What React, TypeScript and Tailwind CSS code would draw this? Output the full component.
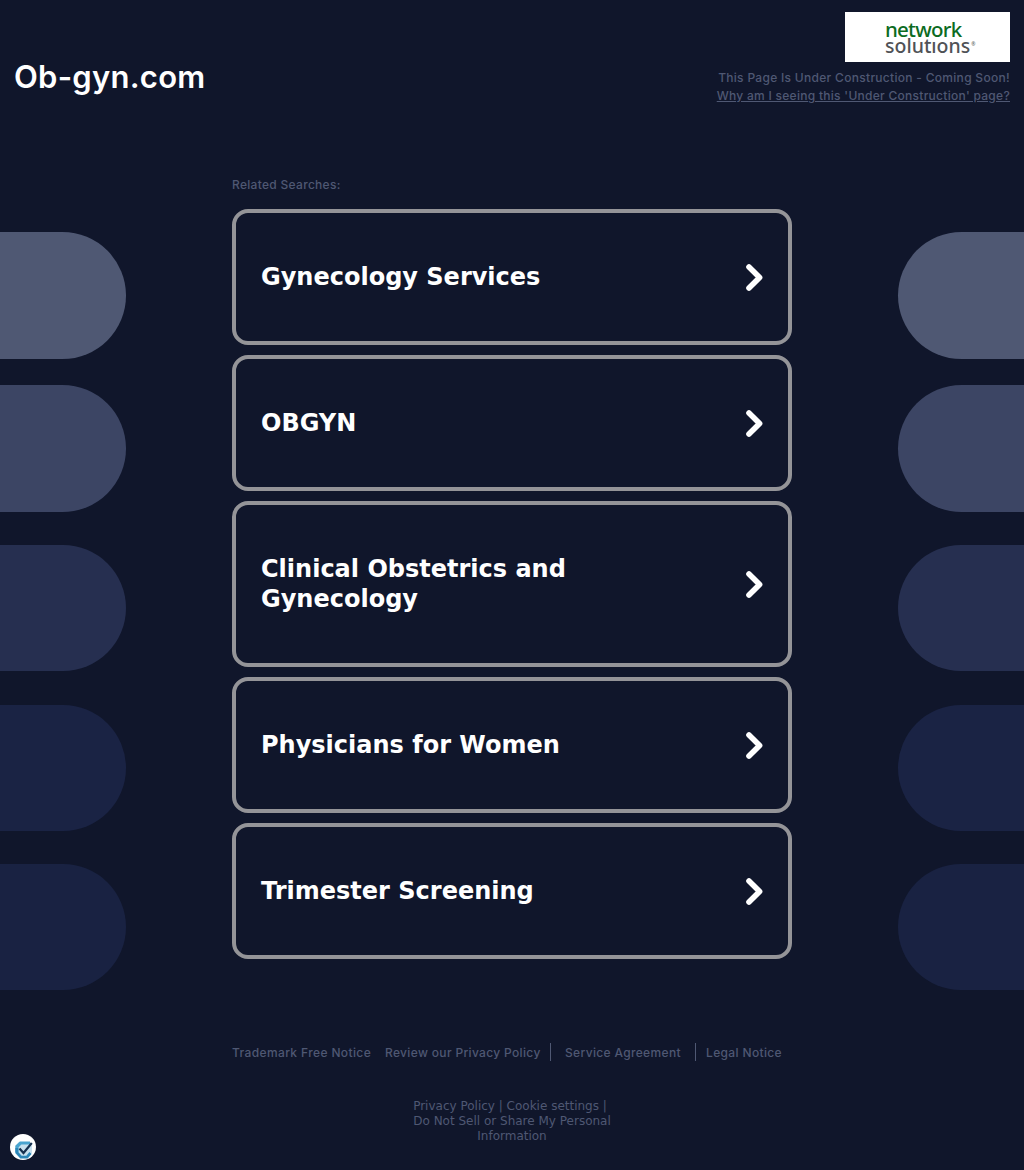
const searches = [
  { title: 'Gynecology Services', height: 'h-[136px]' },
  { title: 'OBGYN', height: 'h-[136px]' },
  { title: 'Clinical Obstetrics and Gynecology', height: 'h-[166px]' },
  { title: 'Physicians for Women', height: 'h-[136px]' },
  { title: 'Trimester Screening', height: 'h-[136px]' },
];

const pills = [
  'h-[127px] bg-[#4f5873]',
  'mt-[26px] h-[127px] bg-[#3c4564]',
  'mt-[33px] h-[126px] bg-[#262f50]',
  'mt-[34px] h-[126px] bg-[#1a2344]',
  'mt-[33px] h-[126px] bg-[#192242]',
];

function Pills({ side }: { side: 'left' | 'right' }) {
  const round = side === 'left' ? 'rounded-r-full' : 'rounded-l-full';
  return (
    <div className="flex w-[126px] flex-col pt-[62px]" aria-hidden="true">
      {pills.map((p) => (
        <div key={p} className={`shrink-0 ${round} ${p}`} />
      ))}
    </div>
  );
}

function Chevron() {
  return (
    <svg width="18" height="28" viewBox="0 0 18 28" fill="none" className="shrink-0">
      <path d="M3 4 L13.6 14.5 L3 25" stroke="#fff" strokeWidth="5.6" strokeLinecap="round" strokeLinejoin="round" />
    </svg>
  );
}

function Logo() {
  return (
    <div
      aria-label="network solutions"
      className="flex h-[50px] w-[165px] flex-col bg-white pt-[9px] pl-[40px] font-['Noto_Sans',sans-serif]"
    >
      <span className="h-[17px] text-[20.5px] leading-[17px] font-medium tracking-[-0.75px] text-[#0b6b22]">network</span>
      <span className="flex h-[16px] text-[19.5px] leading-[16px] text-[#505256]">
        solutıons<span className="ml-px text-[5px] leading-[13px]">®</span>
      </span>
    </div>
  );
}

function Badge() {
  return (
    <svg width="26" height="26" viewBox="0 0 26 26">
      <circle cx="13" cy="13" r="13" fill="#fff" />
      <path d="M9 8 H18 L22 12 V19 L17 24 H10 L5 19 V12 Z" fill="#c6e0ef" />
      <path d="M20 9 H10.5 L7 12.5 V18" fill="none" stroke="#49a4d0" strokeWidth="3.2" />
      <path d="M6.8 14 V18.5 L11 23.2 H17 L20.5 19" fill="none" stroke="#2b86b8" strokeWidth="2.8" />
      <path d="M9.5 14.5 L13.5 19 L21.8 9" fill="none" stroke="#15304f" strokeWidth="2.2" />
    </svg>
  );
}

export default function App() {
  return (
    <div className="relative flex h-[1170px] w-[1024px] flex-col overflow-hidden bg-[#10162b] font-['Inter',sans-serif] text-[#4f5873]">
      <header className="flex h-[170px] shrink-0 justify-between px-[14px] pt-3">
        <h1 className="pt-[43px] text-[31px] leading-[44px] font-semibold tracking-[0.25px] text-white">Ob-gyn.com</h1>
        <div className="flex flex-col items-end text-[12px] leading-[18px] font-medium">
          <Logo />
          <span className="mt-[7px] tracking-[0.3px] whitespace-nowrap">This Page Is Under Construction - Coming Soon!</span>
          <a href="#" className="tracking-[0.28px] whitespace-nowrap underline">Why am I seeing this 'Under Construction' page?</a>
        </div>
      </header>

      <div className="flex h-[850px] shrink-0 justify-between">
        <Pills side="left" />
        <main className="w-[560px] pt-[6px]">
          <p className="text-[12px] leading-[18px] font-medium tracking-[0.3px]">Related Searches:</p>
          <div className="mt-[15px] flex flex-col gap-[10px]">
            {searches.map((s) => (
              <a
                key={s.title}
                href="#"
                className={`flex items-center justify-between rounded-[16px] border-4 border-[#949498] pr-[24px] pl-[25px] font-['DejaVu_Sans',sans-serif] text-[24px] leading-[30px] font-bold text-white ${s.height}`}
              >
                <span className="w-[340px]">{s.title}</span>
                <Chevron />
              </a>
            ))}
          </div>
        </main>
        <Pills side="right" />
      </div>

      <footer className="pl-[232px]">
        <nav className="flex pt-[23px] text-[12px] leading-[18px] font-medium whitespace-nowrap">
          <a href="#" className="w-[153px] pt-px tracking-[0.38px]">Trademark Free Notice</a>
          <a href="#" className="h-[18px] w-[166px] border-r border-[#4f5873] pt-px tracking-[0.34px]">Review our Privacy Policy</a>
          <a href="#" className="h-[18px] w-[145px] border-r border-[#4f5873] pt-px pl-[14px] tracking-[0.34px]">Service Agreement</a>
          <a href="#" className="pt-px pl-[10px] tracking-[0.36px]">Legal Notice</a>
        </nav>
        <div className="mt-[37px] ml-[170px] w-[220px] text-center font-['DejaVu_Sans',sans-serif] text-[12px] leading-[15px] whitespace-nowrap">
          <p className="pr-[4px]">Privacy Policy | Cookie settings |</p>
          <p>Do Not Sell or Share My Personal</p>
          <p>Information</p>
        </div>
      </footer>

      <a href="#" aria-label="Privacy options" className="absolute bottom-[10px] left-[10px]">
        <Badge />
      </a>
    </div>
  );
}
